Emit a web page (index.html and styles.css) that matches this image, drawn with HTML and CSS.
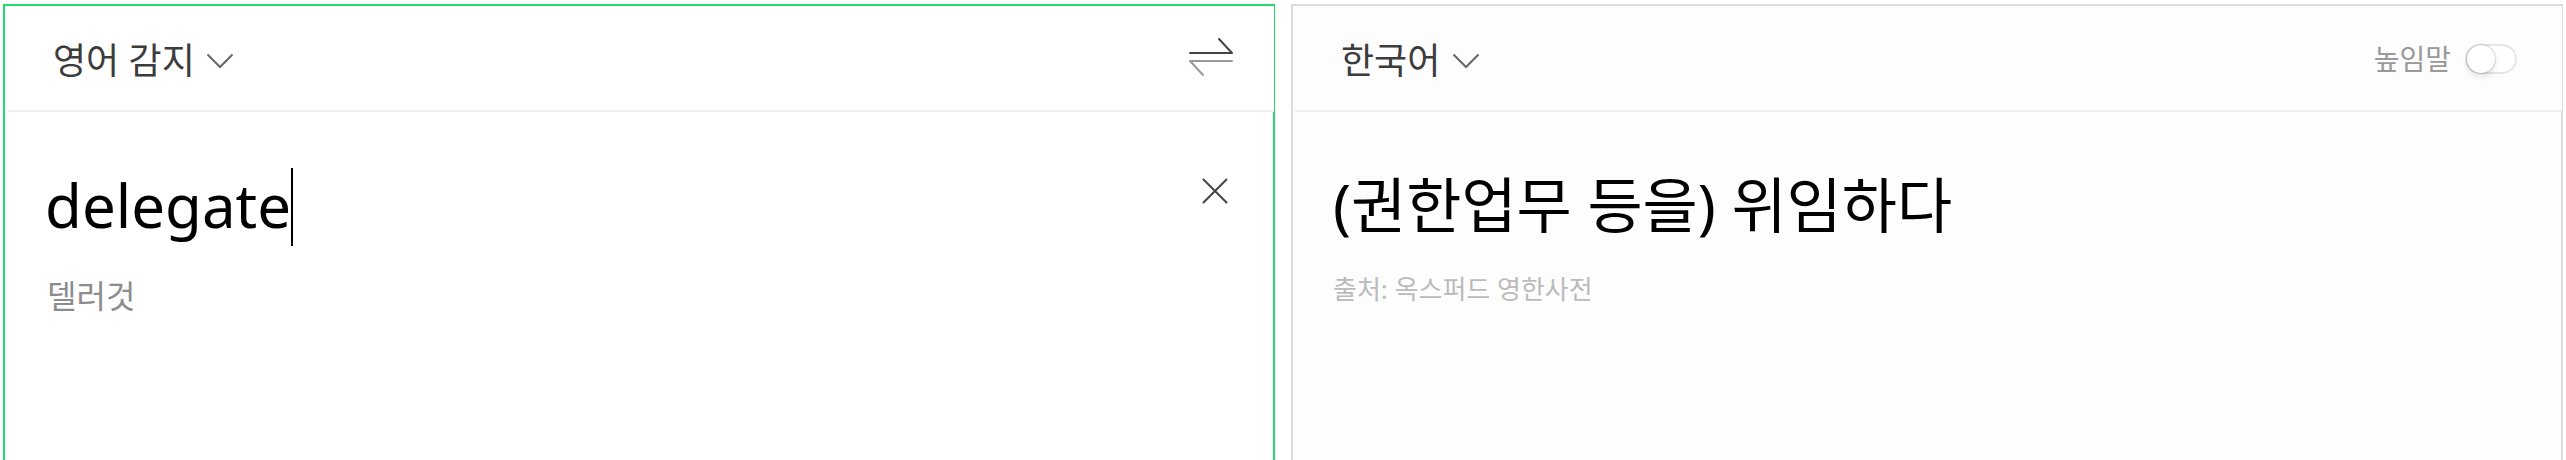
FILE: index.html
```html
<!DOCTYPE html>
<html lang="ko">
<head>
<meta charset="utf-8">
<title>번역</title>
<link rel="stylesheet" href="styles.css">
</head>
<body>
<main class="translator">
  <section class="panel panel-source">
    <header class="panel-header">
      <div class="language">
        <select class="language-select" aria-label="원본 언어"><option>영어 감지</option></select>
        <svg class="chevron" viewBox="0 0 28 16" aria-hidden="true"><path d="M1.500 1.500L14 14L26.500 1.500"/></svg>
      </div>
      <button class="icon-button" type="button" aria-label="언어 바꾸기">
        <svg class="swap-icon" viewBox="0 0 44 40" aria-hidden="true">
          <path class="swap-forward" d="M1 15H43L30 1"/>
          <path class="swap-back" d="M43 23H1L14 37"/>
        </svg>
      </button>
    </header>
    <div class="panel-body">
      <div class="entry">
        <div class="entry-line">
          <input class="entry-input" type="text" value="delegate" aria-label="번역할 내용">
          <span class="caret"></span>
        </div>
        <p class="pronunciation">델러것</p>
      </div>
      <button class="icon-button clear-button" type="button" aria-label="지우기">
        <svg class="close-icon" viewBox="0 0 26 26" aria-hidden="true"><path d="M1.500 1.500L24.500 24.500M24.500 1.500L1.500 24.500"/></svg>
      </button>
    </div>
  </section>
  <section class="panel panel-target">
    <header class="panel-header">
      <div class="language">
        <select class="language-select" aria-label="번역 언어"><option>한국어</option></select>
        <svg class="chevron" viewBox="0 0 28 16" aria-hidden="true"><path d="M1.500 1.500L14 14L26.500 1.500"/></svg>
      </div>
      <label class="honorific">높임말<input class="switch" type="checkbox" role="switch"></label>
    </header>
    <div class="panel-body">
      <div class="result">
        <p class="result-text">(권한업무 등을) 위임하다</p>
        <p class="result-source">출처: 옥스퍼드 영한사전</p>
      </div>
    </div>
  </section>
</main>
</body>
</html>
```
FILE: styles.css
```css
* { box-sizing: border-box; }

body {
  margin: 0;
  background: #fff;
  color: #000;
  font-family: "Noto Sans", "Noto Sans CJK KR", sans-serif;
}

p { margin: 0; }

input, select, button { font: inherit; color: inherit; }

.translator {
  display: grid;
  grid-template-columns: 1fr 1fr;
  gap: 16px;
  min-height: 100vh;
  padding: 4px 3px 0;
}

.panel {
  display: flex;
  flex-direction: column;
  border: 2px solid #dcdcdc;
  border-bottom: 0;
}

.panel-source { border-color: #23d970; background: #fff; }
.panel-target { background: #fdfdfd; }

.panel-header {
  display: flex;
  align-items: center;
  justify-content: space-between;
  height: 106px;
  margin: 0 -1px 0 2px;
  padding: 0 41px 0 46px;
  border-bottom: 2px solid #efefef;
  background: inherit;
}

.language {
  display: flex;
  align-items: center;
  gap: 11px;
  padding-top: 6px;
}

.language-select {
  appearance: none;
  padding: 0;
  border: 0;
  background: none;
  color: #3c3c3c;
  font-size: 36px;
  line-height: 52px;
}

.chevron {
  width: 28px;
  height: 16px;
  fill: none;
  stroke: #666;
  stroke-width: 2;
}

.icon-button {
  display: flex;
  padding: 0;
  border: 0;
  background: none;
}

.swap-icon {
  width: 44px;
  height: 40px;
  fill: none;
  stroke-width: 2;
  stroke-linecap: round;
  stroke-linejoin: round;
}

.swap-forward { stroke: #444; }
.swap-back { stroke: #999; }

.panel-body {
  display: flex;
  align-items: flex-start;
  justify-content: space-between;
  padding: 56px 45px 0 40px;
}

.entry-line { display: flex; align-items: flex-start; }

.entry-input {
  field-sizing: content;
  height: 74px;
  padding: 0;
  border: 0;
  outline: 0;
  background: none;
  font-size: 60px;
  line-height: 74px;
}

.caret { width: 2px; height: 78px; background: #000; }

.pronunciation {
  margin-top: 26px;
  padding-left: 2px;
  color: #8c8c8c;
  font-size: 32px;
  line-height: 48px;
}

.clear-button { margin-top: 10px; }

.close-icon {
  width: 26px;
  height: 26px;
  fill: none;
  stroke: #444;
  stroke-width: 2;
  stroke-linecap: round;
}

.honorific {
  display: flex;
  align-items: center;
  gap: 14px;
  padding: 2px 4px 0 0;
  color: #999;
  font-size: 28px;
  line-height: 40px;
}

.switch {
  appearance: none;
  display: flex;
  align-items: center;
  width: 52px;
  height: 30px;
  margin: 0;
  border: 2px solid #e5e5e5;
  border-radius: 15px;
  background: #fff;
}

.switch::before {
  content: "";
  width: 28px;
  height: 28px;
  border-radius: 50%;
  background: #fff;
  box-shadow: 0 0 2px rgba(0, 0, 0, 0.4), 0 4px 6px rgba(0, 0, 0, 0.1);
}

.switch:checked { justify-content: flex-end; background: #23d970; }

.result-text { font-size: 60px; line-height: 74px; }

.result-source {
  margin-top: 28px;
  color: #bbb;
  font-size: 26px;
  line-height: 38px;
}
```
